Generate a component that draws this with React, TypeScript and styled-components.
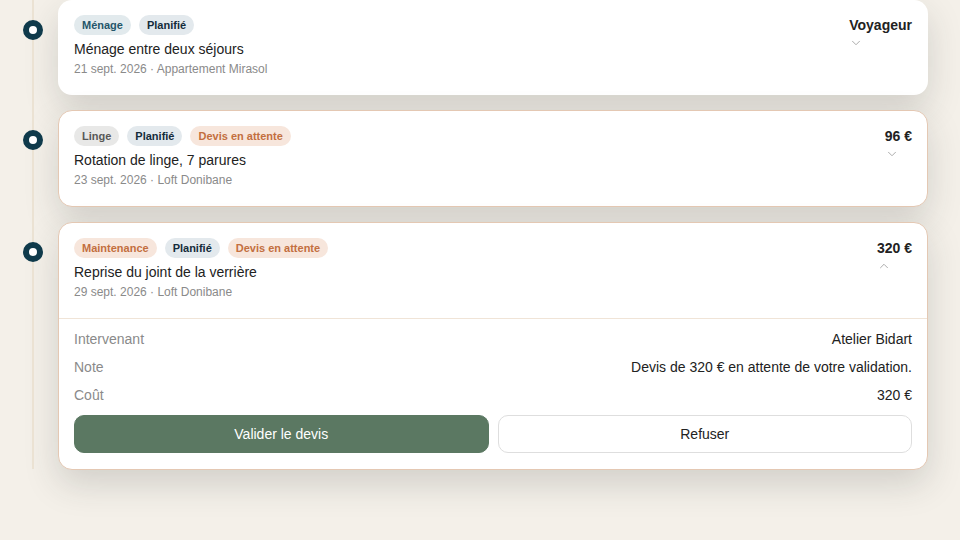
import React from 'react';
import styled, { createGlobalStyle } from 'styled-components';
import { ChevronDown, ChevronUp } from 'lucide-react';

type Tone = 'teal' | 'navy' | 'grey' | 'amber';

interface Intervention {
  id: string;
  tags: { label: string; tone: Tone }[];
  title: string;
  date: string;
  place: string;
  right: string;
  pending?: boolean;
  open?: boolean;
  details?: { label: string; value: string }[];
}

const items: Intervention[] = [
  {
    id: 'menage',
    tags: [
      { label: 'Ménage', tone: 'teal' },
      { label: 'Planifié', tone: 'navy' }
    ],
    title: 'Ménage entre deux séjours',
    date: '21 sept. 2026',
    place: 'Appartement Mirasol',
    right: 'Voyageur'
  },
  {
    id: 'linge',
    tags: [
      { label: 'Linge', tone: 'grey' },
      { label: 'Planifié', tone: 'navy' },
      { label: 'Devis en attente', tone: 'amber' }
    ],
    title: 'Rotation de linge, 7 parures',
    date: '23 sept. 2026',
    place: 'Loft Donibane',
    right: '96 €',
    pending: true
  },
  {
    id: 'verriere',
    tags: [
      { label: 'Maintenance', tone: 'amber' },
      { label: 'Planifié', tone: 'navy' },
      { label: 'Devis en attente', tone: 'amber' }
    ],
    title: 'Reprise du joint de la verrière',
    date: '29 sept. 2026',
    place: 'Loft Donibane',
    right: '320 €',
    pending: true,
    open: true,
    details: [
      { label: 'Intervenant', value: 'Atelier Bidart' },
      { label: 'Note', value: 'Devis de 320 € en attente de votre validation.' },
      { label: 'Coût', value: '320 €' }
    ]
  }
];

const toneColors: Record<Tone, { bg: string; fg: string }> = {
  teal: { bg: '#e2eaed', fg: '#25566a' },
  navy: { bg: '#e3e9ed', fg: '#142c3b' },
  grey: { bg: '#e8e8e7', fg: '#585858' },
  amber: { bg: '#f7e6dc', fg: '#c36f3f' }
};

const GlobalStyle = createGlobalStyle`
  html, body {
    margin: 0;
    padding: 0;
    background: #f4f0e9;
    font-family: "Liberation Sans", Arial, sans-serif;
    color: #222;
  }
  * { box-sizing: border-box; }
`;

const Page = styled.div`
  width: 960px;
  height: 540px;
  overflow: hidden;
  padding: 0 32px 0 0;
`;

const Timeline = styled.div`
  position: relative;
  display: flex;
  flex-direction: column;
  gap: 15px;

  &::before {
    content: '';
    position: absolute;
    left: 32px;
    top: 0;
    bottom: 1px;
    width: 2px;
    background: #ebe2d3;
  }
`;

const Item = styled.div`
  display: flex;
  gap: 15px;
  padding-left: 23px;
`;

const Dot = styled.span`
  position: relative;
  flex-shrink: 0;
  width: 20px;
  height: 20px;
  margin-top: 20px;
  border-radius: 50%;
  border: 6px solid #0f3a4b;
  background: #fff;
`;

const Card = styled.div<{ $pending?: boolean }>`
  flex: 1;
  background: #fff;
  border-radius: 14px;
  border: ${(p) => (p.$pending ? '1px solid #e4c8b3' : 'none')};
  padding: ${(p) => (p.$pending ? '0' : '0 1px')};
  box-shadow: 0 14px 34px rgba(40, 50, 45, 0.17);
  overflow: hidden;
`;

const Header = styled.div`
  display: flex;
  justify-content: space-between;
  align-items: flex-start;
  padding: 15px 15px 18px;
`;

const Main = styled.div`
  display: flex;
  flex-direction: column;
`;

const Tags = styled.div`
  display: flex;
  gap: 8px;
`;

const Pill = styled.span<{ $tone: Tone }>`
  display: inline-flex;
  align-items: center;
  height: 20px;
  padding: 0 8px;
  border-radius: 10px;
  font-size: 11px;
  font-weight: 700;
  background: ${(p) => toneColors[p.$tone].bg};
  color: ${(p) => toneColors[p.$tone].fg};
`;

const Title = styled.div`
  margin-top: 4px;
  font-size: 14px;
  line-height: 20px;
  color: #222;
`;

const Meta = styled.div`
  margin-top: 2px;
  font-size: 12px;
  line-height: 16px;
  color: #8a8a8a;
`;

const Side = styled.div`
  display: flex;
  flex-direction: column;
  align-items: flex-start;
`;

const Amount = styled.div`
  font-size: 14px;
  font-weight: 700;
  line-height: 20px;
  color: #222;
`;

const Toggle = styled.span`
  display: flex;
  margin-top: 1px;
  color: #a0a0a0;
`;

const Body = styled.div`
  border-top: 1px solid #f0e4d7;
  padding: 10px 15px 16px;
  display: flex;
  flex-direction: column;
  gap: 8px;
`;

const Row = styled.div`
  display: flex;
  justify-content: space-between;
  font-size: 14px;
  line-height: 20px;
`;

const Label = styled.span`
  color: #8a8a8a;
`;

const Value = styled.span`
  color: #222;
`;

const Actions = styled.div`
  display: grid;
  grid-template-columns: 1fr 1fr;
  gap: 9px;
  margin-top: 2px;
`;

const Button = styled.button<{ $primary?: boolean }>`
  height: 38px;
  border-radius: 10px;
  font-family: inherit;
  font-size: 14px;
  cursor: pointer;
  border: 1px solid ${(p) => (p.$primary ? '#5b7862' : '#dedede')};
  background: ${(p) => (p.$primary ? '#5b7862' : '#fff')};
  color: ${(p) => (p.$primary ? '#fff' : '#222')};
`;

export default function App() {
  return (
    <>
      <GlobalStyle />
      <Page>
        <Timeline>
          {items.map((it) => (
            <Item key={it.id}>
              <Dot />
              <Card $pending={it.pending}>
                <Header>
                  <Main>
                    <Tags>
                      {it.tags.map((t, i) => (
                        <Pill key={i} $tone={t.tone}>
                          {t.label}
                        </Pill>
                      ))}
                    </Tags>
                    <Title>{it.title}</Title>
                    <Meta>
                      {it.date} · {it.place}
                    </Meta>
                  </Main>
                  <Side>
                    <Amount>{it.right}</Amount>
                    <Toggle>
                      {it.open ? (
                        <ChevronUp size={14} strokeWidth={1.5} />
                      ) : (
                        <ChevronDown size={14} strokeWidth={1.5} />
                      )}
                    </Toggle>
                  </Side>
                </Header>
                {it.open && it.details && (
                  <Body>
                    {it.details.map((d) => (
                      <Row key={d.label}>
                        <Label>{d.label}</Label>
                        <Value>{d.value}</Value>
                      </Row>
                    ))}
                    <Actions>
                      <Button $primary>Valider le devis</Button>
                      <Button>Refuser</Button>
                    </Actions>
                  </Body>
                )}
              </Card>
            </Item>
          ))}
        </Timeline>
      </Page>
    </>
  );
}
